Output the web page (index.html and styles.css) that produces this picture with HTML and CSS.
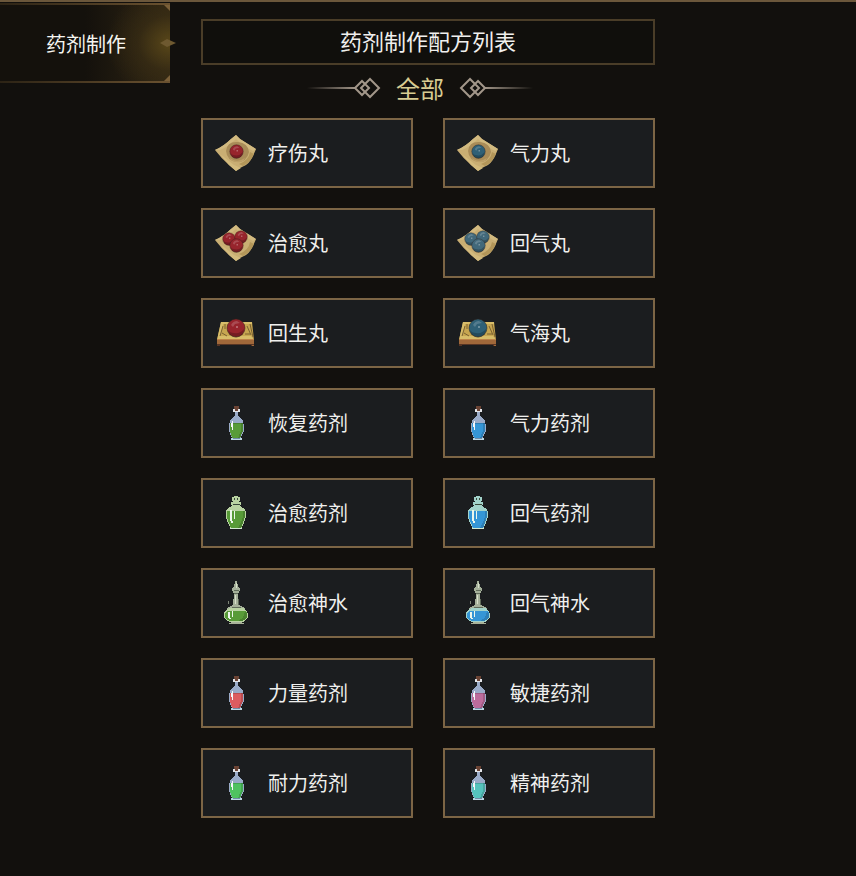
FILE: index.html
```html
<!DOCTYPE html>
<html lang="zh-CN">
<head>
    <meta charset="UTF-8">
    <meta name="viewport" content="width=device-width, initial-scale=1.0">
    <title>药剂制作</title>
    <link rel="stylesheet" href="styles.css">
</head>
<body>

    <!-- Shared icon shapes, the tint comes from each card -->
    <svg class="sprites" aria-hidden="true">
        <defs>
            <linearGradient id="fade">
                <stop offset="0" stop-color="#a3978a" stop-opacity="0"/>
                <stop offset="1" stop-color="#a3978a"/>
            </linearGradient>
            <symbol id="paper" viewBox="0 0 48 48">
                <path d="M24 6 L28 10 Q36 15 44 20 Q39 33 34 36 Q29 38 24 42 L17 36 Q9 29 3 21 Q12 17 19 10 Z" fill="#c9ae73"/>
                <path d="M24 6 L28 10 Q36 15 44 20 L41 22 Q31 17 24 10 Q16 18 8 21 L3 21 Q12 17 19 10 Z" fill="#d2ba80"/>
                <path d="M38 23 Q37 31 27 35 L31 37 Q39 33 42 25 Z" fill="#b39659"/>
                <path d="M8 25 L17 36 L24 42 L29 39 L22 36 Z" fill="#d3bb7e"/>
            </symbol>
            <symbol id="ball" viewBox="0 0 20 20">
                <circle cx="10" cy="10" r="9" fill="currentColor" stroke="#2e211c" stroke-opacity=".5" stroke-width="1"/>
                <path d="M2 12 A8 8 0 0 0 18 11 Q14 16 8 15 Q4 15 2 12 Z" fill="#000" opacity=".22"/>
                <path d="M5 7 Q7 3 11 3 L14 5 L9 6 L7 9 Z" fill="#fff" opacity=".18"/>
                <path d="M10 8 h2 v2 h-2 Z" fill="#fff" opacity=".3"/>
            </symbol>
            <symbol id="pill" viewBox="0 0 48 48">
                <use href="#paper"/>
                <path d="M14 22 Q15 12 26 13 Q36 14 37 23 Q35 33 25 33 Q15 32 14 22 Z" fill="#a98c58"/>
                <path d="M17 28 Q24 35 33 29 L31 32 Q25 35 19 31 Z" fill="#bda067"/>
                <use href="#ball" x="17" y="15" width="15" height="15"/>
            </symbol>
            <symbol id="pills" viewBox="0 0 48 48">
                <use href="#paper"/>
                <use href="#ball" x="10" y="13" width="14" height="14"/>
                <use href="#ball" x="22" y="11" width="14" height="14"/>
                <use href="#ball" x="17" y="19" width="15" height="15"/>
            </symbol>
            <symbol id="box" viewBox="0 0 48 48">
                <path d="M9 13 H40 L42 31 H5 Z" fill="#c7a650"/>
                <path d="M9 13 H40 V15 H11 L8 27 H39 L42 31 H5 Z" fill="#d8bd69"/>
                <path d="M11 17 L8 27 M13 15 V20 M10 24 L15 27 M35 17 L39 26 M38 15 L41 28 M33 25 H38 M17 25 H31" stroke="#594323" stroke-opacity=".7" fill="none"/>
                <path d="M5 30 H42 V37 H39 V35 H8 V37 H5 Z" fill="#a0683a"/>
                <path d="M5 30 H42 V31 H5 Z" fill="#bd8348"/>
                <path d="M5 35 H42 V36 H40 V37 H39 V36 H8 V37 H5 Z" fill="#573524"/>
                <use href="#ball" x="13" y="9" width="22" height="20"/>
            </symbol>
            <symbol id="bottle" viewBox="0 0 48 48" shape-rendering="crispEdges">
                <path d="M22 7 H27 V10 H26 V12 H23 V10 H22 Z" fill="#6b4435"/>
                <path d="M21 10 H23 V12 H26 V10 H28 V13 H21 Z" fill="#e2e4e8"/>
                <path d="M23 13 H26 V17 L29 19 L31 22 V25 L32 26 V32 L30 36 L29 39 H20 L18 35 L17 31 V25 L19 20 L23 17 Z" fill="#9aabc8"/>
                <path d="M18 24 H31 V32 L28 39 H20 L18 32 V27 Z" fill="currentColor"/>
                <path d="M29 24 H31 V32 L28 39 H26 L29 32 Z" fill="#000" opacity=".15"/>
                <path d="M18 24 H31 V25 H18 Z" fill="#000" opacity=".15"/>
                <path d="M20 22 H21 V31 H20 V28 H19 V24 H20 Z" fill="#f4f6fa"/>
                <path d="M19 39 H30 V41 H19 Z" fill="#b9d6e3"/>
                <path d="M21 39 H28 V40 H21 Z" fill="#6f8aa5"/>
            </symbol>
            <symbol id="jar" viewBox="0 0 48 48" shape-rendering="crispEdges">
                <path d="M22 7 H26 V8 H28 V12 H27 V13 H29 V16 H28 V17 L33 20 L34 23 V28 L32 34 L30 38 V40 H18 V38 L16 34 L14 28 V22 L16 19 L20 17 V16 H19 V13 H21 V12 H20 V8 H22 Z" fill="var(--glass)"/>
                <path d="M22 9 H23 V11 H22 Z M25 9 H26 V11 H25 Z M21 15 H28 V16 H21 Z" fill="#3a4a3b"/>
                <path d="M15 22 H33 V28 L31 34 L29 39 H19 L17 34 L15 28 Z" fill="currentColor"/>
                <path d="M31 22 H33 V28 L31 34 L29 39 H26 L29 33 L31 28 Z" fill="#000" opacity=".15"/>
                <path d="M18 21 H20 V30 L21 34 H19 L18 30 Z M22 22 H23 V30 H22 Z" fill="#edf7ec"/>
                <path d="M18 39 H30 V40 H18 Z" fill="#d3e9d2"/>
            </symbol>
            <symbol id="flask" viewBox="0 0 48 48" shape-rendering="crispEdges">
                <path d="M23 2 H25 V5 H26 V8 H27 V9 H28 V12 H27 V14 H26 V20 H27 V26 L33 29 L31 31 H16 L15 29 L21 26 V20 H22 V14 H21 V12 H20 V9 H21 V8 H22 V5 H23 Z" fill="#a5b09a"/>
                <path d="M22 11 H27 V12 H22 Z M22 14 H26 V15 H22 Z M26 20 H27 V26 H26 Z M20 28 H29 V29 H20 Z" fill="#5f6a59"/>
                <path d="M24 4 H25 V9 H24 Z M23 16 H24 V25 H23 Z" fill="#d7dfca"/>
                <path d="M16 22 H17 V25 H16 Z" fill="#7d8577"/>
                <path d="M18 29 H31 L35 32 L36 35 V38 L33 42 L30 43 H18 L14 41 L12 38 V34 L14 31 Z" fill="var(--glass)"/>
                <path d="M15 32 H33 L35 34 V38 L32 41 L29 42 H18 L13 39 V35 Z" fill="currentColor"/>
                <path d="M33 33 L35 34 V38 L32 41 L29 42 H26 L31 39 Z" fill="#000" opacity=".15"/>
                <path d="M16 33 H18 V37 L19 40 H17 L16 37 Z M20 32 H21 V38 H20 Z" fill="#edf7ec"/>
                <path d="M19 43 H30 V44 H32 V45 H17 V44 H19 Z" fill="#a9b39a"/>
            </symbol>
            <symbol id="ornament" viewBox="0 0 74 24">
                <path d="M0 11 H49 V13 H0 Z" fill="url(#fade)"/>
                <path d="M55 5 L62 12 L55 19 L48 12 Z M63 3 L72 12 L63 21 L54 12 Z" fill="none" stroke="#a3978a" stroke-width="2"/>
            </symbol>
        </defs>
    </svg>

    <div class="layout">
        <nav>
            <a href="#recipes" class="tab">
                药剂制作
                <svg class="tab-corner top" viewBox="0 0 6 6"><path d="M0 0 H6 V6 Z"/></svg>
                <svg class="tab-corner bottom" viewBox="0 0 6 6"><path d="M6 0 V6 H0 Z"/></svg>
                <svg class="tab-mark" viewBox="0 0 16 8"><path d="M0 4 L7 0 L16 4 L7 8 Z"/></svg>
            </a>
        </nav>

        <main id="recipes">
            <h1>药剂制作配方列表</h1>

            <div class="section-title">
                <svg class="ornament" aria-hidden="true"><use href="#ornament"/></svg>
                <h2>全部</h2>
                <svg class="ornament flip" aria-hidden="true"><use href="#ornament"/></svg>
            </div>

            <ul class="recipes">
                <li><button class="recipe red"><svg class="icon"><use href="#pill"/></svg>疗伤丸</button></li>
                <li><button class="recipe teal"><svg class="icon"><use href="#pill"/></svg>气力丸</button></li>
                <li><button class="recipe red"><svg class="icon"><use href="#pills"/></svg>治愈丸</button></li>
                <li><button class="recipe teal light"><svg class="icon"><use href="#pills"/></svg>回气丸</button></li>
                <li><button class="recipe red"><svg class="icon"><use href="#box"/></svg>回生丸</button></li>
                <li><button class="recipe teal"><svg class="icon"><use href="#box"/></svg>气海丸</button></li>
                <li><button class="recipe green"><svg class="icon"><use href="#bottle"/></svg>恢复药剂</button></li>
                <li><button class="recipe blue"><svg class="icon"><use href="#bottle"/></svg>气力药剂</button></li>
                <li><button class="recipe green"><svg class="icon"><use href="#jar"/></svg>治愈药剂</button></li>
                <li><button class="recipe blue"><svg class="icon"><use href="#jar"/></svg>回气药剂</button></li>
                <li><button class="recipe green"><svg class="icon"><use href="#flask"/></svg>治愈神水</button></li>
                <li><button class="recipe blue"><svg class="icon"><use href="#flask"/></svg>回气神水</button></li>
                <li><button class="recipe coral"><svg class="icon"><use href="#bottle"/></svg>力量药剂</button></li>
                <li><button class="recipe pink"><svg class="icon"><use href="#bottle"/></svg>敏捷药剂</button></li>
                <li><button class="recipe mint"><svg class="icon"><use href="#bottle"/></svg>耐力药剂</button></li>
                <li><button class="recipe cyan"><svg class="icon"><use href="#bottle"/></svg>精神药剂</button></li>
            </ul>
        </main>
    </div>

</body>
</html>
```

FILE: styles.css
```css
/* General Styling */
* {
    box-sizing: border-box;
}

body {
    font-family: "Noto Sans CJK SC", sans-serif;
    background-color: #12100d;
    border-top: 2px solid #6b573b;
    margin: 0;
    min-height: 100vh;
    color: #f0f0ee;
}

.sprites {
    position: absolute;
    width: 0;
    height: 0;
}

.layout {
    display: grid;
    grid-template-columns: 170px minmax(0, 1fr) 170px;
}

/* Side Tab */
nav {
    padding-top: 1px;
}

.tab {
    display: flex;
    align-items: center;
    justify-content: center;
    position: relative;
    height: 80px;
    padding: 2px 0 0 2px;
    border: solid #5c4727;
    border-width: 2px 0;
    border-image: linear-gradient(90deg, #2c2315, #6b5230) 1;
    background:
        radial-gradient(ellipse 64px 56px at 100% 50%, #594719, #3d301599 50%, transparent),
        linear-gradient(90deg, #14110c 50%, #2f2513);
    color: #f6f5f0;
    font-size: 20px;
    line-height: 24px;
    text-decoration: none;
}

.tab-corner {
    position: absolute;
    right: 0;
    width: 6px;
    height: 6px;
    fill: #7a5f38;
}

.tab-corner.top {
    top: 0;
}

.tab-corner.bottom {
    bottom: 0;
}

.tab-mark {
    position: absolute;
    top: 34px;
    right: -6px;
    width: 16px;
    height: 8px;
    fill: #6e5930;
}

/* Recipe List */
main {
    padding: 17px 31px 56px;
}

h1 {
    margin: 0;
    padding: 6px 8px 10px;
    border: 2px solid #4a3d28;
    background-color: #100f0c;
    font-size: 22px;
    font-weight: 400;
    line-height: 26px;
    text-align: center;
}

.section-title {
    display: flex;
    align-items: center;
    justify-content: center;
    gap: 15px;
    padding: 7px 16px 14px 0;
}

.section-title h2 {
    margin: 0;
    color: #d8cc92;
    font-size: 24px;
    font-weight: 400;
    line-height: 32px;
}

.ornament {
    width: 74px;
    height: 24px;
}

.flip {
    transform: scaleX(-1);
}

.recipes {
    display: grid;
    grid-template-columns: 1fr 1fr;
    gap: 20px 30px;
    margin: 0;
    padding: 0;
    list-style: none;
}

.recipe {
    --glass: #b9d3a2;
    display: flex;
    align-items: center;
    gap: 8px;
    width: 100%;
    height: 70px;
    padding: 0 9px;
    border: 2px solid #7c6545;
    background-color: #1b1d1f;
    color: #f0f0ee;
    font-family: inherit;
    font-size: 20px;
    line-height: 24px;
    text-align: left;
    cursor: pointer;
}

/* The button text stays white, only the icon takes the tint */
.icon {
    flex: none;
    width: 48px;
    height: 48px;
}

.red .icon {
    color: #97242c;
}

.teal .icon {
    color: #2f6076;
}

.light .icon {
    color: #41687a;
}

.green .icon {
    color: #589b38;
}

.blue .icon {
    color: #3596d6;
}

.blue {
    --glass: #a2d3ca;
}

.coral .icon {
    color: #dc5c60;
}

.pink .icon {
    color: #bc6c9c;
}

.mint .icon {
    color: #4fc260;
}

.cyan .icon {
    color: #55c3bd;
}
```
